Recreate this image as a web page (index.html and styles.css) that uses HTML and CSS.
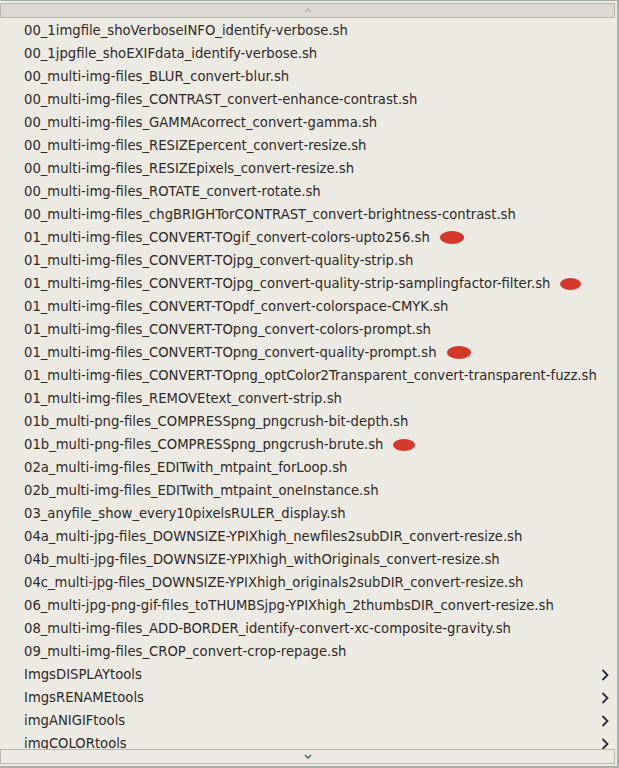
FILE: index.html
```html
<!DOCTYPE html>
<html>
<head>
<meta charset="utf-8">
<link rel="stylesheet" href="styles.css">
</head>
<body>
<div class="menu">
  <div class="scroller top">
    <svg width="8" height="5" viewBox="0 0 8 5"><polyline points="1,4 4,1 7,4" fill="none" stroke="#b3b0aa" stroke-width="1.3"/></svg>
  </div>
  <div class="list">
    <div class="item">00_1imgfile_shoVerboseINFO_identify-verbose.sh</div>
    <div class="item">00_1jpgfile_shoEXIFdata_identify-verbose.sh</div>
    <div class="item">00_multi-img-files_BLUR_convert-blur.sh</div>
    <div class="item">00_multi-img-files_CONTRAST_convert-enhance-contrast.sh</div>
    <div class="item">00_multi-img-files_GAMMAcorrect_convert-gamma.sh</div>
    <div class="item">00_multi-img-files_RESIZEpercent_convert-resize.sh</div>
    <div class="item">00_multi-img-files_RESIZEpixels_convert-resize.sh</div>
    <div class="item">00_multi-img-files_ROTATE_convert-rotate.sh</div>
    <div class="item">00_multi-img-files_chgBRIGHTorCONTRAST_convert-brightness-contrast.sh</div>
    <div class="item">01_multi-img-files_CONVERT-TOgif_convert-colors-upto256.sh<span class="dot d1"></span></div>
    <div class="item">01_multi-img-files_CONVERT-TOjpg_convert-quality-strip.sh</div>
    <div class="item">01_multi-img-files_CONVERT-TOjpg_convert-quality-strip-samplingfactor-filter.sh<span class="dot d2"></span></div>
    <div class="item">01_multi-img-files_CONVERT-TOpdf_convert-colorspace-CMYK.sh</div>
    <div class="item">01_multi-img-files_CONVERT-TOpng_convert-colors-prompt.sh</div>
    <div class="item">01_multi-img-files_CONVERT-TOpng_convert-quality-prompt.sh<span class="dot d1"></span></div>
    <div class="item">01_multi-img-files_CONVERT-TOpng_optColor2Transparent_convert-transparent-fuzz.sh</div>
    <div class="item">01_multi-img-files_REMOVEtext_convert-strip.sh</div>
    <div class="item">01b_multi-png-files_COMPRESSpng_pngcrush-bit-depth.sh</div>
    <div class="item">01b_multi-png-files_COMPRESSpng_pngcrush-brute.sh<span class="dot d3"></span></div>
    <div class="item">02a_multi-img-files_EDITwith_mtpaint_forLoop.sh</div>
    <div class="item">02b_multi-img-files_EDITwith_mtpaint_oneInstance.sh</div>
    <div class="item">03_anyfile_show_every10pixelsRULER_display.sh</div>
    <div class="item">04a_multi-jpg-files_DOWNSIZE-YPIXhigh_newfiles2subDIR_convert-resize.sh</div>
    <div class="item">04b_multi-jpg-files_DOWNSIZE-YPIXhigh_withOriginals_convert-resize.sh</div>
    <div class="item">04c_multi-jpg-files_DOWNSIZE-YPIXhigh_originals2subDIR_convert-resize.sh</div>
    <div class="item">06_multi-jpg-png-gif-files_toTHUMBSjpg-YPIXhigh_2thumbsDIR_convert-resize.sh</div>
    <div class="item">08_multi-img-files_ADD-BORDER_identify-convert-xc-composite-gravity.sh</div>
    <div class="item">09_multi-img-files_CROP_convert-crop-repage.sh</div>
    <div class="item sub"><span>ImgsDISPLAYtools</span><svg class="arrow" width="8" height="12" viewBox="0 0 8 12"><polyline points="1.5,1 6.5,6 1.5,11" fill="none" stroke="#2c2a38" stroke-width="1.8"/></svg></div>
    <div class="item sub"><span>ImgsRENAMEtools</span><svg class="arrow" width="8" height="12" viewBox="0 0 8 12"><polyline points="1.5,1 6.5,6 1.5,11" fill="none" stroke="#2c2a38" stroke-width="1.8"/></svg></div>
    <div class="item sub"><span>imgANIGIFtools</span><svg class="arrow" width="8" height="12" viewBox="0 0 8 12"><polyline points="1.5,1 6.5,6 1.5,11" fill="none" stroke="#2c2a38" stroke-width="1.8"/></svg></div>
    <div class="item sub"><span>imgCOLORtools</span><svg class="arrow" width="8" height="12" viewBox="0 0 8 12"><polyline points="1.5,1 6.5,6 1.5,11" fill="none" stroke="#2c2a38" stroke-width="1.8"/></svg></div>
  </div>
  <div class="scroller bottom">
    <svg width="8" height="5" viewBox="0 0 8 5"><polyline points="1,1 4,4 7,1" fill="none" stroke="#3d6b5e" stroke-width="1.5"/></svg>
  </div>
</div>
</body>
</html>
```

FILE: styles.css
```css
html, body {
  margin: 0;
  padding: 0;
  background: #edeae4;
}
.menu {
  box-sizing: border-box;
  width: 619px;
  height: 768px;
  border-top: 1px solid #a7aea9;
  border-right: 2px solid #a7aea9;
  border-bottom: 2px solid #a7aea9;
  padding: 2px 2px 1px 0;
  display: flex;
  flex-direction: column;
  background: #edeae4;
  font-family: "DejaVu Sans", sans-serif;
  font-size: 13.2px;
  color: #2d2926;
}
.scroller {
  box-sizing: border-box;
  height: 15px;
  flex: none;
  border: 1px solid #b9b7b0;
  display: flex;
  align-items: center;
  justify-content: center;
}
.scroller.top {
  background: #dcd9d3;
}
.scroller.bottom {
  background: #edeae4;
  margin-bottom: 1px;
}
.list {
  flex: 1;
  overflow: hidden;
  padding-top: 1px;
}
.item {
  height: 23px;
  line-height: 23px;
  padding-left: 24px;
  white-space: nowrap;
  display: flex;
  align-items: center;
}
.item.sub {
  justify-content: space-between;
  padding-right: 6px;
}
.dot {
  display: inline-block;
  background: #d4382b;
  border-radius: 50%;
  margin-left: 10px;
}
.d1 { width: 24px; height: 13px; }
.d2 { width: 21px; height: 12px; }
.d3 { width: 22px; height: 12px; }
.arrow { display: block; }
```
